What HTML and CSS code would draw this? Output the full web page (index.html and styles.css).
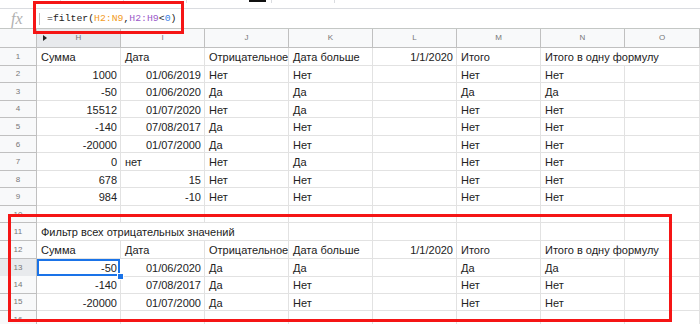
FILE: index.html
```html
<!DOCTYPE html>
<html lang="ru">

<head>
    <meta charset="UTF-8">
    <title>Фильтр</title>
    <link rel="stylesheet" href="styles.css">
</head>

<body>
    <div class="sheet">
        <div class="toolbar">
            <span class="sep"></span>
            <span class="sep"></span>
            <span class="sep"></span>
            <span class="black"></span>
            <span class="sep"></span>
            <span class="sep"></span>
        </div>

        <div class="formula-bar">
            <span class="fx">fx</span>
            <span class="bar-sep"></span>
            <span class="formula">=filter(<span class="ref1">H2:N9</span>,<span class="ref2">H2:H9</span>&lt;<span class="num">0</span>)</span>
        </div>

        <div class="row head">
            <div class="rn"></div>
            <div class="c sel"><span class="tri"></span>H</div>
            <div class="c">I</div>
            <div class="c">J</div>
            <div class="c">K</div>
            <div class="c">L</div>
            <div class="c">M</div>
            <div class="c">N</div>
            <div class="c">O</div>
        </div>

        <div class="row">
            <div class="rn">1</div>
            <div class="c">Сумма</div>
            <div class="c">Дата</div>
            <div class="c">Отрицательное?</div>
            <div class="c">Дата больше</div>
            <div class="c r">1/1/2020</div>
            <div class="c">Итого</div>
            <div class="c span2">Итого в одну формулу</div>
        </div>
        <div class="row">
            <div class="rn">2</div>
            <div class="c r">1000</div>
            <div class="c r">01/06/2019</div>
            <div class="c">Нет</div>
            <div class="c">Нет</div>
            <div class="c"></div>
            <div class="c">Нет</div>
            <div class="c">Нет</div>
            <div class="c"></div>
        </div>
        <div class="row">
            <div class="rn">3</div>
            <div class="c r">-50</div>
            <div class="c r">01/06/2020</div>
            <div class="c">Да</div>
            <div class="c">Да</div>
            <div class="c"></div>
            <div class="c">Да</div>
            <div class="c">Да</div>
            <div class="c"></div>
        </div>
        <div class="row">
            <div class="rn">4</div>
            <div class="c r">15512</div>
            <div class="c r">01/07/2020</div>
            <div class="c">Нет</div>
            <div class="c">Да</div>
            <div class="c"></div>
            <div class="c">Нет</div>
            <div class="c">Нет</div>
            <div class="c"></div>
        </div>
        <div class="row">
            <div class="rn">5</div>
            <div class="c r">-140</div>
            <div class="c r">07/08/2017</div>
            <div class="c">Да</div>
            <div class="c">Нет</div>
            <div class="c"></div>
            <div class="c">Нет</div>
            <div class="c">Нет</div>
            <div class="c"></div>
        </div>
        <div class="row">
            <div class="rn">6</div>
            <div class="c r">-20000</div>
            <div class="c r">01/07/2000</div>
            <div class="c">Да</div>
            <div class="c">Нет</div>
            <div class="c"></div>
            <div class="c">Нет</div>
            <div class="c">Нет</div>
            <div class="c"></div>
        </div>
        <div class="row">
            <div class="rn">7</div>
            <div class="c r">0</div>
            <div class="c">нет</div>
            <div class="c">Нет</div>
            <div class="c">Да</div>
            <div class="c"></div>
            <div class="c">Нет</div>
            <div class="c">Нет</div>
            <div class="c"></div>
        </div>
        <div class="row">
            <div class="rn">8</div>
            <div class="c r">678</div>
            <div class="c r">15</div>
            <div class="c">Нет</div>
            <div class="c">Нет</div>
            <div class="c"></div>
            <div class="c">Нет</div>
            <div class="c">Нет</div>
            <div class="c"></div>
        </div>
        <div class="row">
            <div class="rn">9</div>
            <div class="c r">984</div>
            <div class="c r">-10</div>
            <div class="c">Нет</div>
            <div class="c">Нет</div>
            <div class="c"></div>
            <div class="c">Нет</div>
            <div class="c">Нет</div>
            <div class="c"></div>
        </div>
        <div class="row">
            <div class="rn">10</div>
            <div class="c"></div>
            <div class="c"></div>
            <div class="c"></div>
            <div class="c"></div>
            <div class="c"></div>
            <div class="c"></div>
            <div class="c"></div>
            <div class="c"></div>
        </div>
        <div class="row">
            <div class="rn">11</div>
            <div class="c span3">Фильтр всех отрицательных значений</div>
            <div class="c"></div>
            <div class="c"></div>
            <div class="c"></div>
            <div class="c"></div>
            <div class="c"></div>
        </div>
        <div class="row">
            <div class="rn">12</div>
            <div class="c">Сумма</div>
            <div class="c">Дата</div>
            <div class="c">Отрицательное?</div>
            <div class="c">Дата больше</div>
            <div class="c r">1/1/2020</div>
            <div class="c">Итого</div>
            <div class="c span2">Итого в одну формулу</div>
        </div>
        <div class="row">
            <div class="rn sel">13</div>
            <div class="c r active">-50<span class="handle"></span></div>
            <div class="c r">01/06/2020</div>
            <div class="c">Да</div>
            <div class="c">Да</div>
            <div class="c"></div>
            <div class="c">Да</div>
            <div class="c">Да</div>
            <div class="c"></div>
        </div>
        <div class="row">
            <div class="rn">14</div>
            <div class="c r">-140</div>
            <div class="c r">07/08/2017</div>
            <div class="c">Да</div>
            <div class="c">Нет</div>
            <div class="c"></div>
            <div class="c">Нет</div>
            <div class="c">Нет</div>
            <div class="c"></div>
        </div>
        <div class="row">
            <div class="rn">15</div>
            <div class="c r">-20000</div>
            <div class="c r">01/07/2000</div>
            <div class="c">Да</div>
            <div class="c">Нет</div>
            <div class="c"></div>
            <div class="c">Нет</div>
            <div class="c">Нет</div>
            <div class="c"></div>
        </div>
        <div class="row">
            <div class="rn">16</div>
            <div class="c"></div>
            <div class="c"></div>
            <div class="c"></div>
            <div class="c"></div>
            <div class="c"></div>
            <div class="c"></div>
            <div class="c"></div>
            <div class="c"></div>
        </div>

        <!-- red highlight frames -->
        <div class="mark mark-formula"></div>
        <div class="mark mark-result"></div>
    </div>
</body>

</html>
```

FILE: styles.css
```css
* {
    margin: 0;
    padding: 0;
    box-sizing: border-box;
}

body {
    width: 700px;
    height: 324px;
    overflow: hidden;
    background: #fff;
    font-family: "Liberation Sans", Arial, sans-serif;
    color: #222;
}

.sheet {
    position: relative;
    width: 700px;
    height: 324px;
    overflow: hidden;
}

.toolbar {
    height: 9px;
    border-bottom: 1px solid #dadce0;
    display: flex;
    align-items: flex-start;
    padding-left: 60px;
}

.toolbar .sep {
    width: 1px;
    height: 3px;
    background: #dadce0;
    margin-right: 62px;
}

.toolbar .black {
    width: 17px;
    height: 2px;
    background: #111;
    margin-right: 5px;
}

.formula-bar {
    height: 20px;
    border-bottom: 1px solid #c4c7c5;
    display: flex;
    align-items: center;
}

.fx {
    width: 37px;
    padding-left: 11px;
    font-family: "Liberation Serif", serif;
    font-style: italic;
    font-size: 16px;
    color: #b0b0b0;
}

.bar-sep {
    width: 1px;
    height: 12px;
    background: #c0c0c0;
    margin: 0 7px 0 2px;
}

.formula {
    font-family: "Liberation Mono", monospace;
    font-size: 9.8px;
    color: #222;
}

.ref1 {
    color: #f29b1d;
}

.ref2 {
    color: #9b5ac9;
}

.num {
    color: #3d7fe6;
}

.row {
    display: grid;
    grid-template-columns: 37px repeat(7, 84px) 1fr;
    height: 17.55px;
}

.rn {
    background: #f8f9fa;
    border-right: 1px solid #c0c0c0;
    border-bottom: 1px solid #c0c0c0;
    font-size: 8px;
    color: #777;
    display: flex;
    align-items: center;
    justify-content: center;
}

.rn.sel {
    background: #e8eaed;
}

.c {
    position: relative;
    border-right: 1px solid #e2e2e2;
    border-bottom: 1px solid #e2e2e2;
    font-size: 11px;
    line-height: 16px;
    padding: 1px 3px 0 4px;
    white-space: nowrap;
    overflow: hidden;
}

.c.r {
    text-align: right;
}

.span2 {
    grid-column: span 2;
    overflow: visible;
}

.span3 {
    grid-column: span 3;
}

.head {
    height: 19px;
}

.head .c {
    background: #f8f9fa;
    border-right-color: #c0c0c0;
    border-bottom-color: #c0c0c0;
    font-size: 8px;
    color: #777;
    text-align: center;
    line-height: 18px;
    padding: 0;
}

.head .c.sel {
    background: #e8eaed;
}

.tri {
    position: absolute;
    left: 6px;
    top: 6px;
    border-left: 4px solid #222;
    border-top: 3px solid transparent;
    border-bottom: 3px solid transparent;
}

.c.active {
    overflow: visible;
    z-index: 2;
    box-shadow: inset 0 0 0 2px #1a73e8;
    border-color: transparent;
}

.handle {
    position: absolute;
    right: -4px;
    bottom: -4px;
    width: 7px;
    height: 7px;
    background: #1a73e8;
    border: 1px solid #fff;
}

.mark {
    position: absolute;
    z-index: 3;
    border: 3px solid #f51515;
    pointer-events: none;
}

.mark-formula {
    left: 33px;
    top: 1px;
    width: 151px;
    height: 33px;
}

.mark-result {
    left: 8px;
    top: 214px;
    width: 664px;
    height: 108px;
}
```
